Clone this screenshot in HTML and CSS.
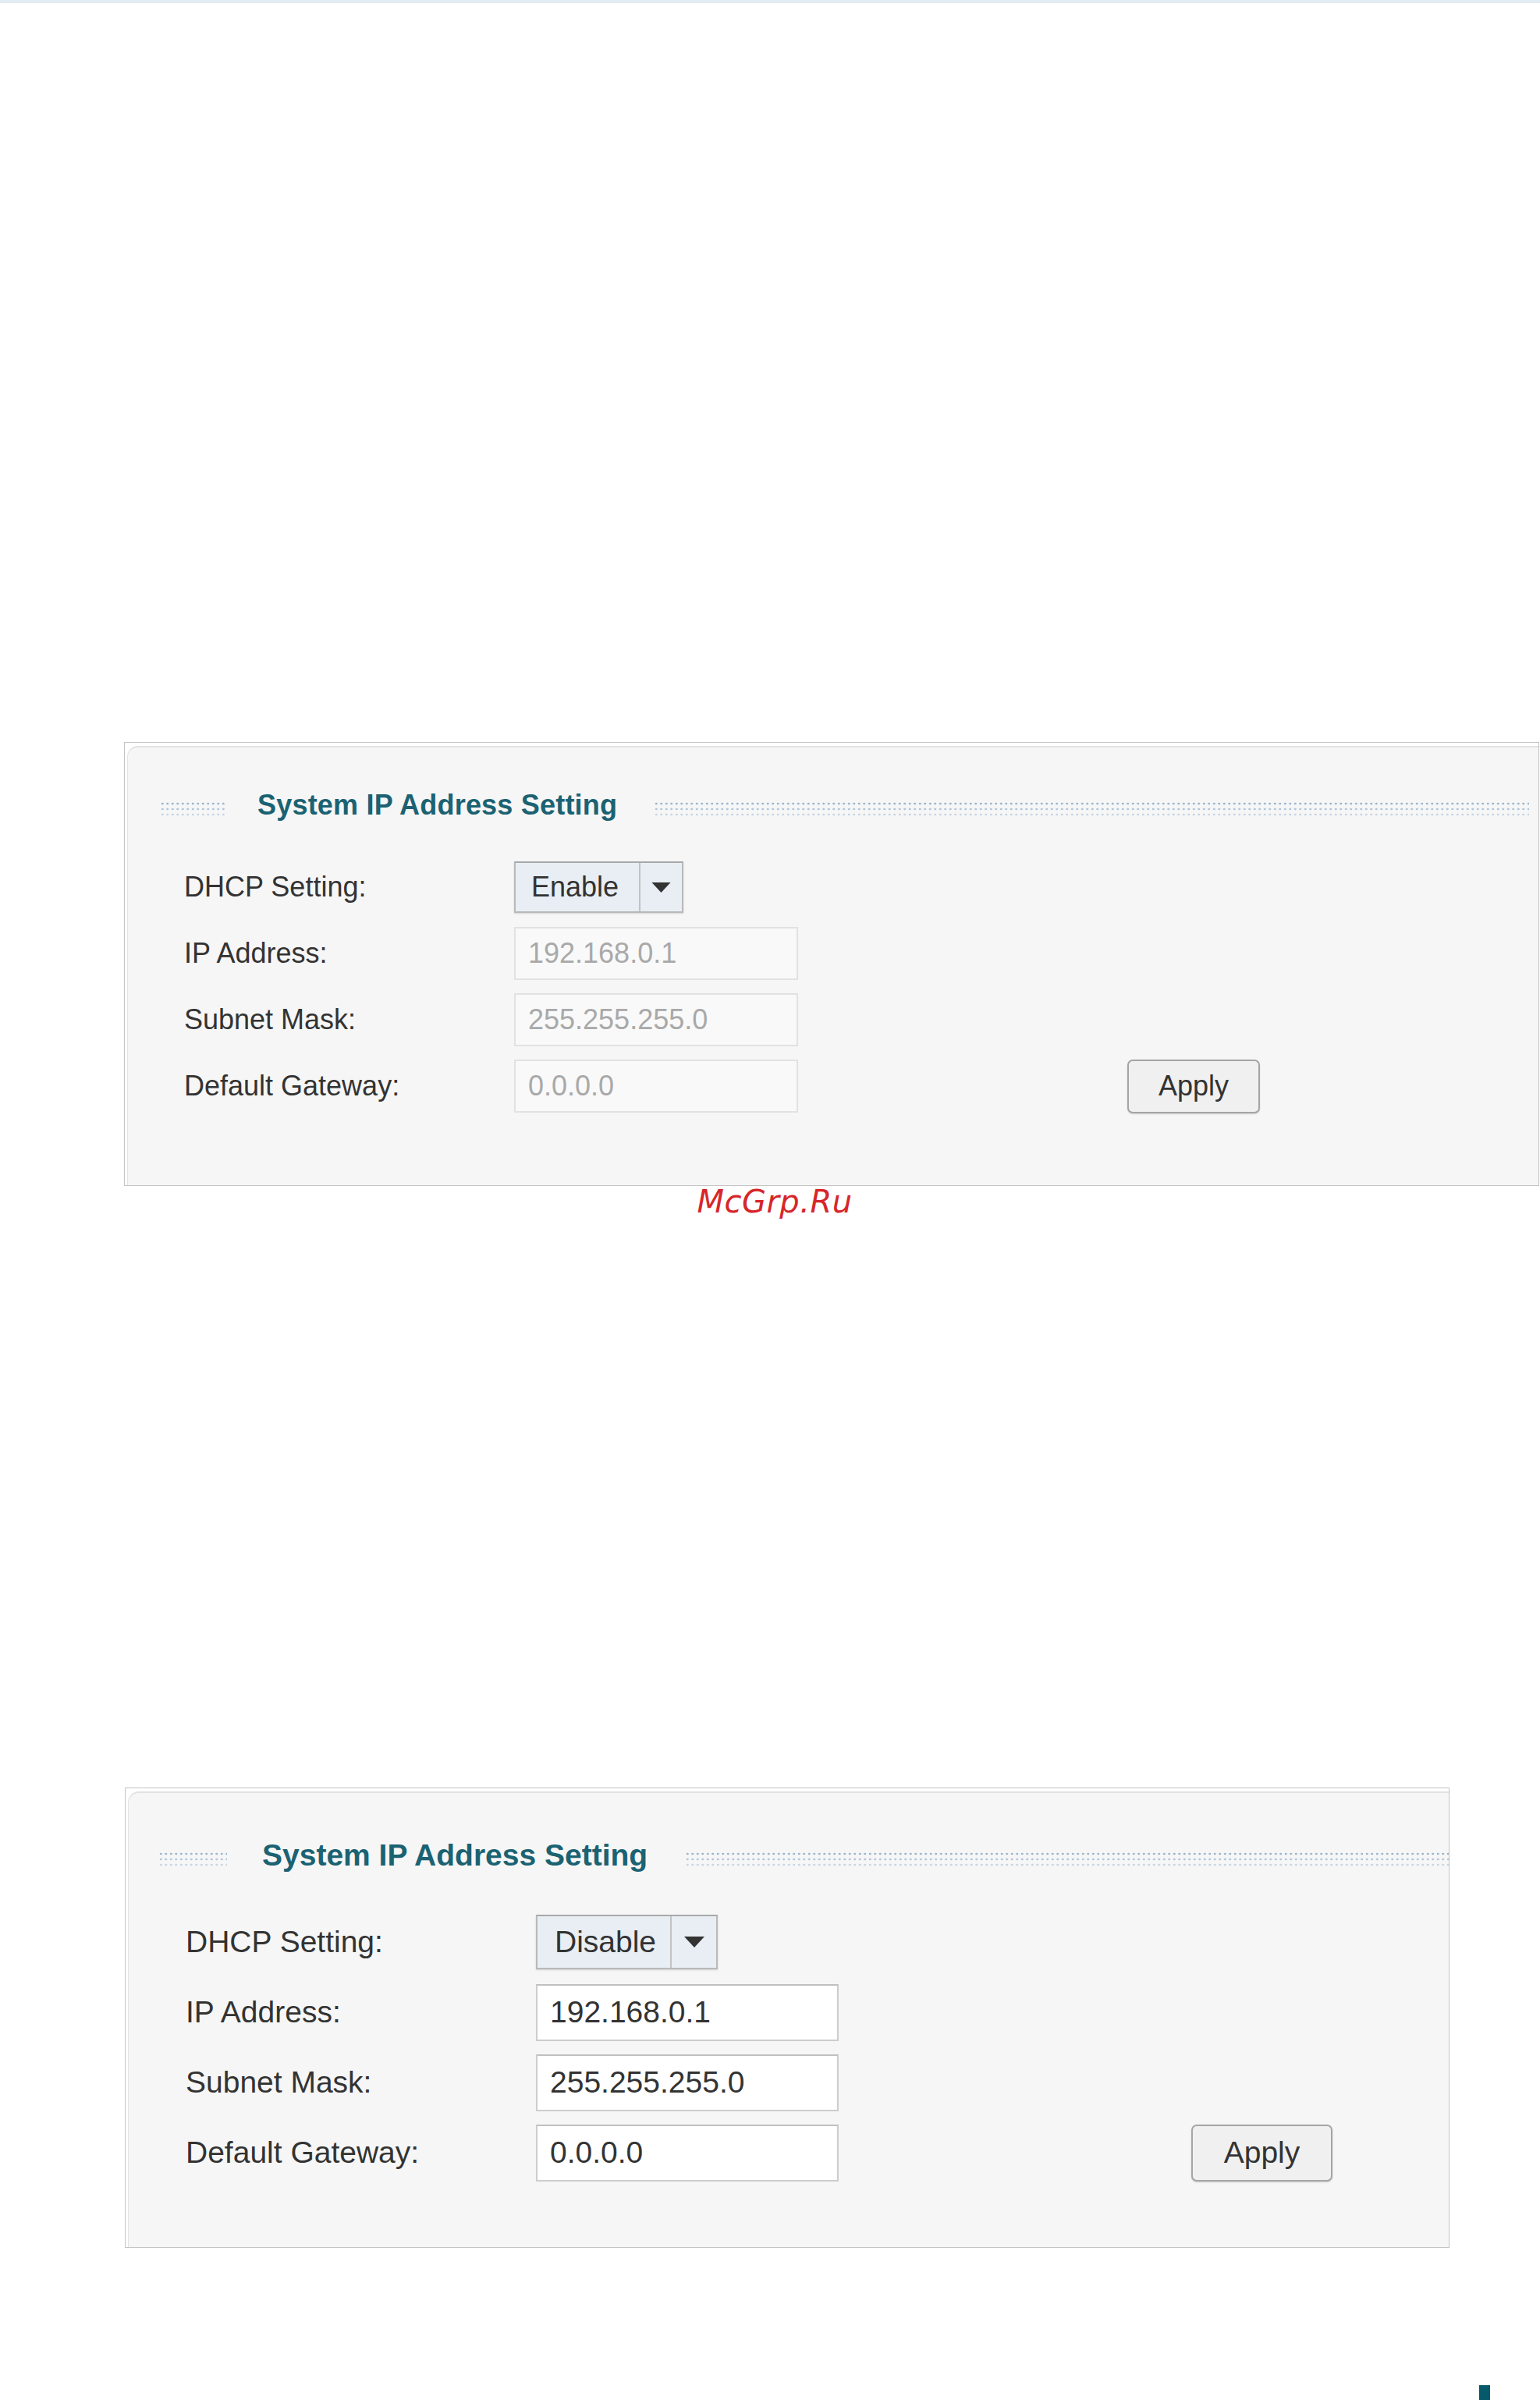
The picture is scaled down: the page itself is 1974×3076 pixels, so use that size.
FILE: index.html
```html
<!DOCTYPE html>
<html lang="en">
<head>
<meta charset="utf-8">
<title>System IP Address Setting</title>
<link rel="stylesheet" href="styles.css">
</head>
<body>
<div class="topbar"></div>

<section class="panel p1">
  <div class="panel-inner">
    <div class="title-row">
      <span class="dots dots-left"></span>
      <h2 class="title">System IP Address Setting</h2>
      <span class="dots dots-right"></span>
    </div>
    <div class="form">
      <div class="label">DHCP Setting:</div>
      <div class="ctrl">
        <div class="select">
          <span class="sel-text">Enable</span>
          <span class="sel-arrow"><svg class="arrow" viewBox="0 0 26 14"><polygon points="0,0 26,0 13,14" fill="#333"/></svg></span>
        </div>
      </div>
      <div class="label">IP Address:</div>
      <div class="ctrl"><div class="field disabled">192.168.0.1</div></div>
      <div class="label">Subnet Mask:</div>
      <div class="ctrl"><div class="field disabled">255.255.255.0</div></div>
      <div class="label">Default Gateway:</div>
      <div class="ctrl"><div class="field disabled">0.0.0.0</div><button class="apply">Apply</button></div>
    </div>
  </div>
</section>

<div class="watermark">McGrp.Ru</div>

<section class="panel p2">
  <div class="panel-inner">
    <div class="title-row">
      <span class="dots dots-left"></span>
      <h2 class="title">System IP Address Setting</h2>
      <span class="dots dots-right"></span>
    </div>
    <div class="form">
      <div class="label">DHCP Setting:</div>
      <div class="ctrl">
        <div class="select">
          <span class="sel-text">Disable</span>
          <span class="sel-arrow"><svg class="arrow" viewBox="0 0 26 14"><polygon points="0,0 26,0 13,14" fill="#333"/></svg></span>
        </div>
      </div>
      <div class="label">IP Address:</div>
      <div class="ctrl"><div class="field">192.168.0.1</div></div>
      <div class="label">Subnet Mask:</div>
      <div class="ctrl"><div class="field">255.255.255.0</div></div>
      <div class="label">Default Gateway:</div>
      <div class="ctrl"><div class="field">0.0.0.0</div><button class="apply">Apply</button></div>
    </div>
  </div>
</section>

<div class="footer-mark"></div>
</body>
</html>
```

FILE: styles.css
```css
html, body {
  margin: 0;
  padding: 0;
  background: #ffffff;
}
body {
  width: 1974px;
  height: 3076px;
  overflow: hidden;
  font-family: "Liberation Sans", Arial, sans-serif;
  color: #333333;
}
.topbar {
  height: 4px;
  background: #e3ebf3;
}

/* panels */
.panel {
  box-sizing: border-box;
  border: 1px solid #c4c4c4;
  background: #ffffff;
  padding: 4px 0 0 3px;
}
.panel-inner {
  box-sizing: border-box;
  height: 100%;
  background: #f6f6f6;
  border-top: 2px solid #e2e2e2;
  border-left: 1px solid #e4e4e4;
  border-top-left-radius: 14px;
}
.p1 {
  margin: 947px 0 0 159px;
  width: 1814px;
  height: 569px;
}
.p2 {
  margin: 731px 0 0 160px;
  width: 1698px;
  height: 590px;
}

/* title row */
.title-row {
  display: flex;
  align-items: flex-start;
}
.title {
  margin: 0;
  font-weight: bold;
  color: #1b6272;
  white-space: nowrap;
}
.dots {
  display: block;
  height: 18px;
  background:
    radial-gradient(circle, #9ab6d0 1.1px, transparent 1.7px) 0 0 / 6.5px 4px repeat-x,
    radial-gradient(circle, #b0c6da 1.1px, transparent 1.7px) 0 7px / 6.5px 4px repeat-x,
    radial-gradient(circle, #c6d5e4 1.1px, transparent 1.7px) 0 14px / 6.5px 4px repeat-x;
}
.dots-right { flex: 1; }

.p1 .title-row { padding-top: 54px; }
.p1 .title { font-size: 36px; line-height: 40px; margin-left: 42px; letter-spacing: 0.2px; }
.p1 .dots { margin-top: 16px; }
.p1 .dots-left { margin-left: 41px; width: 83px; }
.p1 .dots-right { margin-left: 47px; margin-right: 12px; }

.p2 .title-row { padding-top: 59px; }
.p2 .title { font-size: 39px; line-height: 42px; margin-left: 45px; }
.p2 .dots { margin-top: 17px; }
.p2 .dots-left { margin-left: 38px; width: 88px; }
.p2 .dots-right { margin-left: 48px; }

/* form grid */
.form {
  display: grid;
}
.label {
  white-space: nowrap;
  color: #333333;
}
.ctrl {
  display: flex;
  align-items: center;
}
.p1 .form {
  margin-top: 51px;
  padding-left: 72px;
  grid-template-columns: 423px 1fr;
  grid-auto-rows: 68px;
  row-gap: 17px;
  font-size: 36px;
}
.p1 .label { line-height: 68px; }
.p2 .form {
  margin-top: 54px;
  padding-left: 73px;
  grid-template-columns: 449px 1fr;
  grid-auto-rows: 72px;
  row-gap: 18px;
  font-size: 39px;
}
.p2 .label { line-height: 72px; }

/* select */
.select {
  box-sizing: border-box;
  display: flex;
  border: 2px solid #b9b9b9;
  border-top-color: #a9a9a9;
  background: #e8eef4;
  box-shadow: 0 1px 2px rgba(0, 0, 0, 0.15);
  color: #333333;
}
.sel-text {
  box-sizing: border-box;
  display: flex;
  align-items: center;
}
.sel-arrow {
  box-sizing: border-box;
  display: flex;
  align-items: center;
  justify-content: center;
  border-left: 2px solid #c2c2c2;
}
.p1 .select { width: 217px; height: 66px; }
.p1 .sel-text { width: 158px; padding-left: 20px; }
.p1 .sel-arrow { width: 55px; }
.p1 .arrow { width: 25px; height: 13px; }
.p2 .select { width: 233px; height: 70px; }
.p2 .sel-text { width: 170px; padding-left: 22px; }
.p2 .sel-arrow { width: 59px; }
.p2 .arrow { width: 26px; height: 14px; }

/* text fields */
.field {
  box-sizing: border-box;
  display: flex;
  align-items: center;
  white-space: nowrap;
  background: #ffffff;
  border: 2px solid #cdcdcd;
  border-top-color: #c0c0c0;
  color: #333333;
}
.field.disabled {
  background: #f9f9f9;
  border: 2px solid #e2e2e2;
  color: #a9a9a9;
}
.p1 .field { width: 364px; height: 68px; padding-left: 16px; }
.p2 .field { width: 388px; height: 73px; padding-left: 16px; }

/* apply button */
.apply {
  box-sizing: border-box;
  font-family: "Liberation Sans", Arial, sans-serif;
  color: #333333;
  background: #f0f0f0;
  border: 2px solid #a5a5a5;
  border-radius: 7px;
  box-shadow: 0 1px 2px rgba(0, 0, 0, 0.15);
  padding: 0;
}
.p1 .apply { margin-left: 422px; width: 170px; height: 69px; font-size: 36px; }
.p2 .apply { margin-left: 452px; width: 181px; height: 73px; font-size: 39px; }

/* watermark */
.watermark {
  font-family: "DejaVu Sans", sans-serif;
  font-style: oblique;
  font-size: 40px;
  line-height: 40px;
  color: #d7262a;
  text-align: center;
  padding-left: 12px;
  letter-spacing: 0.5px;
}

.footer-mark {
  margin: 176px 0 0 1896px;
  width: 14px;
  height: 19px;
  background: #05596a;
}
```
